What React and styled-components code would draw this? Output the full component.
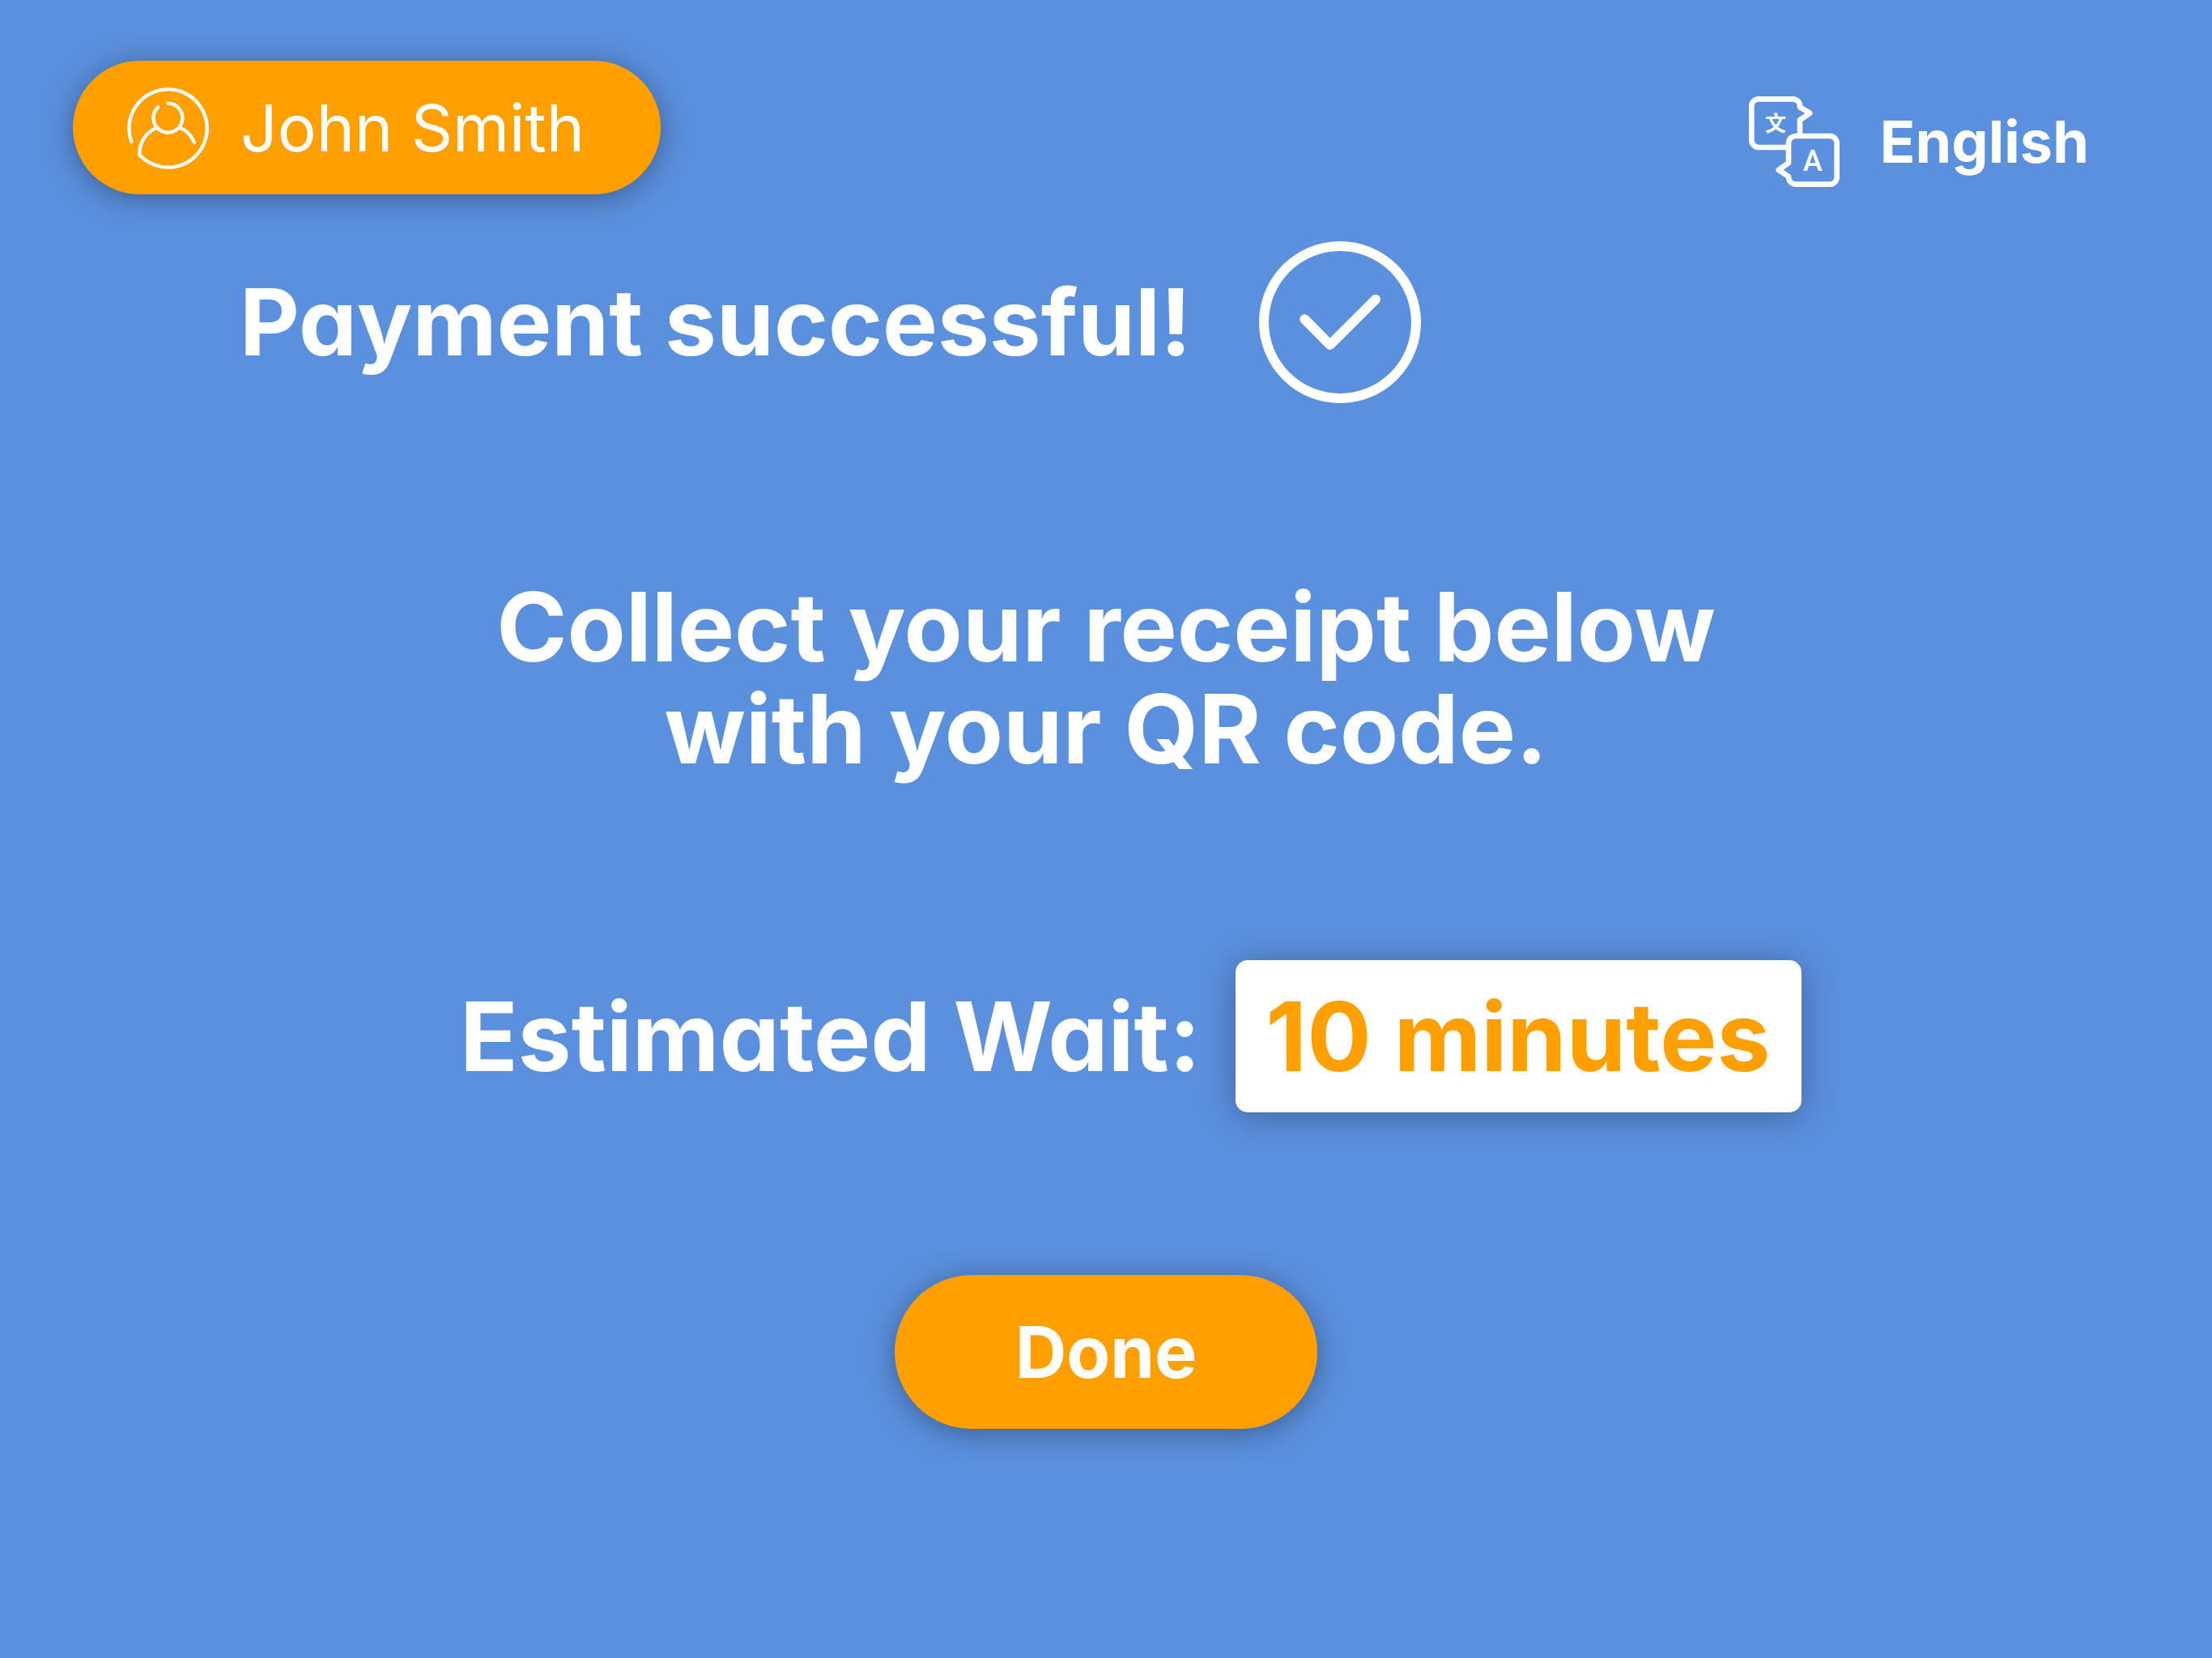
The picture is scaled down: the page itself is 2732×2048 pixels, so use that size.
import React from 'react';
import styled, { createGlobalStyle } from 'styled-components';

const blue = '#5b90de';
const orange = '#ffa000';

const GlobalStyle = createGlobalStyle`
  *, *::before, *::after { box-sizing: border-box; }
  body {
    margin: 0;
    background: ${blue};
    color: #fff;
    font-family: Inter, "Liberation Sans", sans-serif;
    font-feature-settings: "cv11";
  }
  button {
    margin: 0;
    border: 0;
    font: inherit;
    font-feature-settings: inherit;
    color: inherit;
    cursor: pointer;
  }
  h1, p { margin: 0; }
`;

const Screen = styled.div`
  display: flex;
  flex-direction: column;
  min-height: 100vh;
  padding-bottom: 80px;
`;

const Header = styled.header`
  display: flex;
  justify-content: space-between;
  align-items: flex-start;
  padding: 75px 152px 0 90px;
`;

const PillButton = styled.button`
  display: inline-flex;
  align-items: center;
  justify-content: center;
  border-radius: 100px;
  background: ${orange};
  box-shadow: 0 5px 36px rgba(0, 0, 0, 0.35);
`;

const UserButton = styled(PillButton)`
  justify-content: flex-start;
  gap: 38px;
  min-width: 726px;
  height: 165px;
  padding: 0 67px;
  font-size: 80px;
  font-weight: 400;
`;

const DoneButton = styled(PillButton)`
  align-self: center;
  min-width: 522px;
  height: 190px;
  margin-top: 201px;
  font-size: 88px;
  font-weight: 700;
`;

const LanguageButton = styled.button`
  display: inline-flex;
  align-items: center;
  gap: 50px;
  margin-top: 44px;
  padding: 0;
  background: none;
  font-size: 72px;
  font-weight: 700;
  line-height: 112px;
`;

const Icon = styled.svg`
  flex: none;
  width: ${(p) => p.$size}px;
  height: ${(p) => p.$size}px;
  fill: none;
  stroke: currentColor;
  stroke-linecap: round;
  stroke-linejoin: round;
`;

const IconText = styled.text`
  fill: currentColor;
  stroke: none;
  text-anchor: middle;
  font-family: ${(p) => p.$family};
  font-size: ${(p) => p.$size}px;
  font-weight: ${(p) => p.$weight};
`;

const Main = styled.main`
  display: flex;
  flex-direction: column;
  font-size: 118px;
  font-weight: 700;
  line-height: 126px;
`;

const Status = styled.div`
  display: flex;
  align-items: center;
  gap: 84px;
  margin-top: 58px;
  padding-left: 296px;
`;

const Title = styled.h1`
  font-size: 114px;
  font-weight: inherit;
`;

const Message = styled.p`
  margin-top: 213px;
  text-align: center;
`;

const Wait = styled.p`
  display: flex;
  align-items: center;
  justify-content: center;
  gap: 28px;
  margin-top: 223px;
  padding-left: 46px;
`;

const WaitLabel = styled.span`
  min-width: 944px;
  text-align: center;
`;

const WaitTime = styled.strong`
  min-width: 699px;
  padding: 31px 32px;
  border-radius: 15px;
  background: #fff;
  color: ${orange};
  font-weight: inherit;
  text-align: center;
  box-shadow: 0 5px 44px rgba(0, 0, 0, 0.3);
`;

const UserIcon = () => (
  <Icon $size={102} viewBox="50 52 306 306" strokeWidth="13" aria-hidden="true">
    <path d="M66 256A144.5 144.5 0 1 1 96 305C95 254 122 220 160 205" />
    <path d="M202 114A54 54 0 1 1 165 128" />
    <path d="M248 206C271 215 288 233 299 259" />
  </Icon>
);

const LanguageIcon = () => (
  <Icon $size={112} viewBox="54 57 336 336" strokeWidth="20" aria-hidden="true">
    <path
      strokeLinecap="butt"
      d="M192 246H90A26 26 0 0 1 64 220V93A26 26 0 0 1 90 67H217A26 26 0 0 1 243 93V97L280 119L243 145V196"
    />
    <path d="M201 304V230A26 26 0 0 1 227 204H354A26 26 0 0 1 380 230V357A26 26 0 0 1 354 383H228A27 27 0 0 1 201 357V354L164 330Z" />
    <IconText x="153" y="187" $size={78} $weight={700} $family={'"Noto Sans CJK SC", sans-serif'}>
      文
    </IconText>
    <IconText x="290" y="333" $size={108} $weight={500} $family="Roboto, sans-serif">
      A
    </IconText>
  </Icon>
);

const CheckIcon = () => (
  <Icon $size={200} viewBox="48 54 600 600" strokeWidth="36" aria-hidden="true">
    <circle cx="348" cy="354" r="282" />
    <path d="M217 343L311 438L480 269" />
  </Icon>
);

export default function App() {
  return (
    <Screen>
      <GlobalStyle />
      <Header>
        <UserButton type="button">
          <UserIcon />
          John Smith
        </UserButton>
        <LanguageButton type="button">
          <LanguageIcon />
          English
        </LanguageButton>
      </Header>
      <Main>
        <Status>
          <Title>Payment successful!</Title>
          <CheckIcon />
        </Status>
        <Message>
          Collect your receipt below
          <br />
          with your QR code.
        </Message>
        <Wait>
          <WaitLabel>Estimated Wait:</WaitLabel>
          <WaitTime>10 minutes</WaitTime>
        </Wait>
        <DoneButton type="button">Done</DoneButton>
      </Main>
    </Screen>
  );
}
